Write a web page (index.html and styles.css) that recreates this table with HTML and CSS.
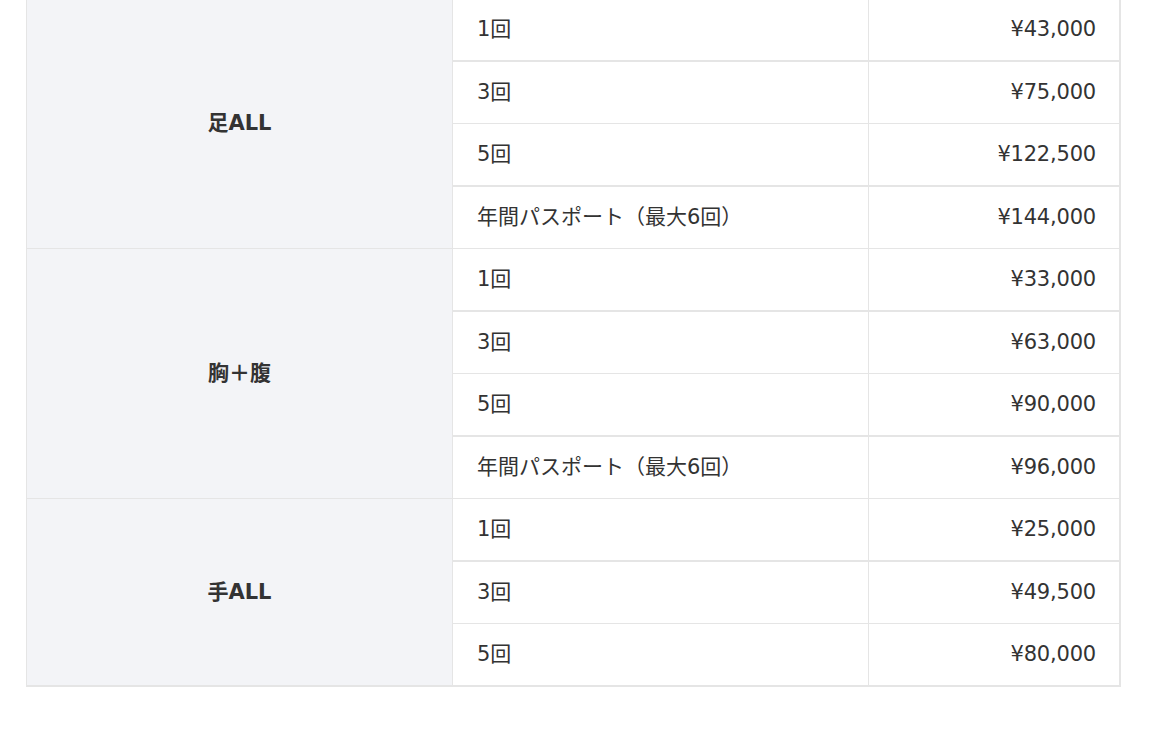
FILE: index.html
```html
<!DOCTYPE html>
<html lang="ja">
<head>
<meta charset="utf-8">
<title>料金表</title>
<link rel="stylesheet" href="styles.css">
</head>
<body>
<div class="wrap">
<table class="price">
  <colgroup><col class="c1"><col class="c2"><col class="c3"></colgroup>
  <tbody>
    <tr class="thick"><th rowspan="4">足ALL</th><td>1回</td><td class="num">¥43,000</td></tr>
    <tr class="thin"><td>3回</td><td class="num">¥75,000</td></tr>
    <tr class="thick"><td>5回</td><td class="num">¥122,500</td></tr>
    <tr class="thin"><td>年間パスポート（最大6回）</td><td class="num">¥144,000</td></tr>
    <tr class="thick"><th rowspan="4">胸＋腹</th><td>1回</td><td class="num">¥33,000</td></tr>
    <tr class="thin"><td>3回</td><td class="num">¥63,000</td></tr>
    <tr class="thick"><td>5回</td><td class="num">¥90,000</td></tr>
    <tr class="thin"><td>年間パスポート（最大6回）</td><td class="num">¥96,000</td></tr>
    <tr class="thick"><th rowspan="3" class="last">手ALL</th><td>1回</td><td class="num">¥25,000</td></tr>
    <tr class="thin"><td>3回</td><td class="num">¥49,500</td></tr>
    <tr class="thick"><td>5回</td><td class="num">¥80,000</td></tr>
  </tbody>
</table>
</div>
</body>
</html>
```
FILE: styles.css
```css
html, body {
  margin: 0;
  padding: 0;
  background: #ffffff;
}
.wrap {
  padding-left: 26px;
  margin-top: -1px;
}
.price {
  border-collapse: separate;
  border-spacing: 0;
  table-layout: fixed;
  width: 1095px;
  border-left: 1px solid #e5e5e5;
  border-right: 2px solid #e5e5e5;
  font-family: "DejaVu Sans", "Noto Sans CJK JP", sans-serif;
  font-size: 21px;
  line-height: 33px;
  color: #333333;
}
.c1 { width: 426px; }
.c2 { width: 416px; }
.c3 { width: 250px; }
.price th, .price td {
  box-sizing: border-box;
  padding: 14px 24px;
  vertical-align: middle;
}
.price th {
  background: #f3f4f7;
  font-weight: 700;
  text-align: center;
  border-right: 1px solid #e5e5e5;
  border-bottom: 1px solid #e5e5e5;
}
.price th.last {
  border-bottom-width: 2px;
}
.price td {
  text-align: left;
  font-weight: 400;
}
.price td.num {
  text-align: right;
  padding-right: 23px;
  letter-spacing: -0.2px;
}
.price td:not(.num) {
  border-right: 1px solid #e5e5e5;
}
.thick td { border-bottom: 2px solid #e5e5e5; }
.thin td { border-bottom: 1px solid #e5e5e5; }
```
